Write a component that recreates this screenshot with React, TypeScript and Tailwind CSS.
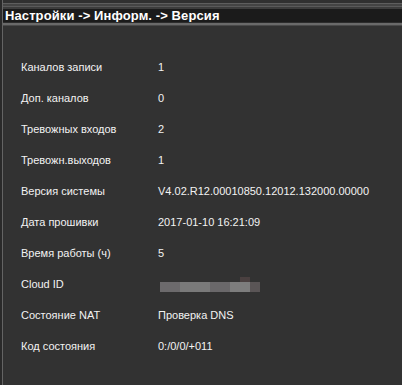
import React from "react";

const rows: [string, string][] = [
  ["Каналов записи", "1"],
  ["Доп. каналов", "0"],
  ["Тревожных входов", "2"],
  ["Тревожн.выходов", "1"],
  ["Версия системы", "V4.02.R12.00010850.12012.132000.00000"],
  ["Дата прошивки", "2017-01-10 16:21:09"],
  ["Время работы (ч)", "5"],
  ["Cloud ID", ""],
  ["Состояние NAT", "Проверка DNS"],
  ["Код состояния", "0:/0/0/+011"],
];

function Blur() {
  return (
    <div className="flex flex-col">
      <div className="flex h-[5px]">
        <div className="w-[80px]" />
        <div className="w-[10px] bg-[#4a4040]" />
      </div>
      <div className="flex h-[10px]">
        <div className="w-[20px] bg-[#6c6a6c]" />
        <div className="w-[30px] bg-[#7a7a7a]" />
        <div className="w-[20px] bg-[#6a686a]" />
        <div className="w-[20px] bg-[#7d7d7d]" />
        <div className="w-[10px] bg-[#5a5556]" />
      </div>
    </div>
  );
}

export default function App() {
  return (
    <div
      className="w-[402px] h-[385px] bg-[#323232] flex overflow-hidden"
      style={{ fontFamily: '"Liberation Sans", Arial, sans-serif' }}
    >
      <div className="w-[2px] bg-[#2a2a2a]" />
      <div className="w-[1px] bg-[#646464]" />
      <div className="flex-1 flex flex-col">
        <div className="h-[3px] bg-[#303030]" />
        <div className="h-[1px] bg-[#5e5e5e]" />
        <div className="h-[2px] bg-[#444444]" />
        <div className="h-[1px] bg-[#5a5a5a]" />
        <div className="h-[2px] bg-[#3c3c3c]" />
        <div className="h-[13px] bg-[#1b1b1b] flex items-center pl-[2px]">
          <span className="text-[13px] font-bold text-white leading-none tracking-[0.1px]">
            Настройки -&gt; Информ. -&gt; Версия
          </span>
        </div>
        <div className="h-[1px] bg-[#2c2c2c]" />
        <div className="h-[2px] bg-[#6a6a6a]" />
        <div className="h-[1px] bg-[#4a4a4a]" />
        <div className="flex flex-col pt-[26px] pl-[18px]">
          {rows.map(([k, v]) => (
            <div key={k} className="h-[31px] flex items-center text-[11px] text-[#f2f2f2]">
              <div className="w-[137px]">{k}</div>
              {k === "Cloud ID" ? <div className="pl-[2px]"><Blur /></div> : <div>{v}</div>}
            </div>
          ))}
        </div>
      </div>
    </div>
  );
}
